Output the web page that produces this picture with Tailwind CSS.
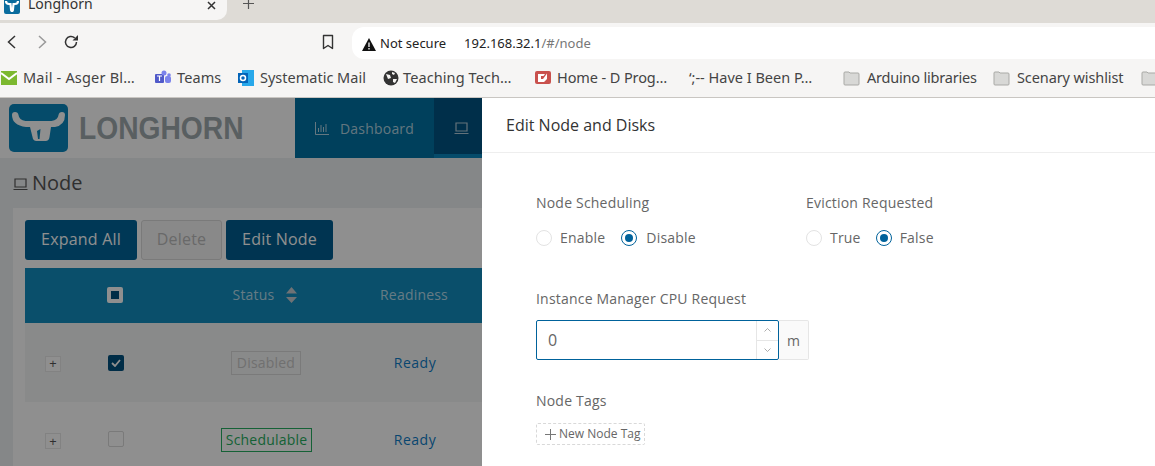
<!DOCTYPE html>
<html lang="en">
<head>
  <meta charset="UTF-8" />
  <title>Longhorn</title>
  <script src="https://cdn.jsdelivr.net/npm/@tailwindcss/browser@4"></script>
</head>
<body class="w-[1155px] h-[466px] overflow-hidden bg-white font-['Open_Sans',sans-serif] tracking-[.2px]">

  <!-- tab strip -->
  <div class="h-[23px] bg-[#dedbd6] overflow-hidden flex items-start font-['Noto_Sans',sans-serif] tracking-normal">
    <div class="w-[227px] h-[20px] bg-[#f6f5f4] rounded-br-[10px] flex items-center pl-1 pr-[11px]">
      <svg class="w-4 h-4 -mt-[8px] shrink-0" viewBox="0 0 16 16"><rect width="16" height="16" rx="2" fill="#0a6c9e"/><path d="M2 3q0 3 3 3h1.500l.5 5q0 2 1 2t1-2l.5-5H11q3 0 3-3" fill="none" stroke="#fff" stroke-width="2.200"/></svg>
      <span class="ml-2 text-[14px] text-[#333] -mt-[13px]">Longhorn</span>
      <span class="ml-auto -mt-[9px]">
        <svg class="w-[9px] h-[9px]" viewBox="0 0 9 9"><path d="M1 1l7 7M8 1L1 8" stroke="#333" stroke-width="1.500"/></svg>
      </span>
    </div>
    <svg class="w-[11px] h-[11px] ml-[16px] -mt-[2px]" viewBox="0 0 11 11"><path d="M5.500 0v11M0 5.500h11" stroke="#555" stroke-width="1.200"/></svg>
  </div>

  <!-- toolbar -->
  <div class="h-[36px] bg-[#f6f5f4] flex items-start pl-[6px] font-['Noto_Sans',sans-serif] tracking-normal">
    <div class="h-[38px] flex items-center">
      <svg class="w-3 h-4" viewBox="0 0 12 16"><path d="M9 2L2.500 8 9 14" fill="none" stroke="#333" stroke-width="1.500"/></svg>
      <svg class="w-3 h-4 ml-[18px]" viewBox="0 0 12 16"><path d="M3 2l6.500 6L3 14" fill="none" stroke="#999" stroke-width="1.500"/></svg>
      <svg class="w-4 h-4 ml-[15px]" viewBox="0 0 16 16"><path d="M13.500 8a5.500 5.500 0 1 1-1.800-4.100" fill="none" stroke="#333" stroke-width="1.500"/><path d="M15 1v5.500H9.500z" fill="#333"/></svg>
      <svg class="w-3 h-4 ml-[243px]" viewBox="0 0 12 16"><path d="M1.500 1.500h9v13L6 11.500l-4.500 3z" fill="none" stroke="#333" stroke-width="1.400" stroke-linejoin="round"/></svg>
    </div>
    <div class="ml-[18px] mt-[4px] h-[32px] flex-1 bg-white rounded-l-[12px] flex items-center pl-[10px] pt-[2px] text-[13px]">
      <svg class="w-[14px] h-[13px]" viewBox="0 0 14 13"><path d="M7 0l7 13H0z" fill="#111"/><path d="M7 4.500v4.500M7 10v1.500" stroke="#fff" stroke-width="1.300"/></svg>
      <span class="ml-1 text-[#222]">Not secure</span>
      <span class="ml-[18px] text-[#222]">192.168.32.1<span class="text-[#777]">/#/node</span></span>
    </div>
  </div>

  <!-- bookmarks bar -->
  <div class="h-[39px] bg-[#f6f5f4] border-b border-[#c9c6c2] flex items-center pb-px text-[14.5px] text-[#444] whitespace-nowrap overflow-hidden font-['Noto_Sans',sans-serif] tracking-normal [&>*]:shrink-0">
    <svg class="w-4 h-[14px] ml-px" viewBox="0 0 16 14"><rect width="16" height="14" fill="#7cb82f"/><path d="M0 2l8 6 8-6" fill="none" stroke="#fff" stroke-width="2"/></svg>
    <span class="ml-[6px] w-[132px] tracking-[.2px]">Mail - Asger Bl…</span>
    <svg class="w-4 h-4" viewBox="0 0 16 16"><rect x="0" y="4" width="9" height="9" rx="1" fill="#5059c9"/><circle cx="9" cy="3" r="2.500" fill="#7b83eb"/><circle cx="14" cy="5" r="1.800" fill="#7b83eb"/><rect x="10" y="6" width="6" height="7" rx="2" fill="#7b83eb"/><path d="M2 6h5M4.500 6v5" stroke="#fff" stroke-width="1.200"/></svg>
    <span class="ml-[6px] w-[61px] tracking-[.1px]">Teams</span>
    <svg class="w-4 h-4" viewBox="0 0 16 16"><rect x="4" width="12" height="16" fill="#28a8ea"/><rect x="0" y="3" width="10" height="10" fill="#0364b8"/><circle cx="5" cy="8" r="2.500" fill="none" stroke="#fff" stroke-width="1.500"/></svg>
    <span class="ml-[6px] w-[123px]">Systematic Mail</span>
    <svg class="w-4 h-4" viewBox="0 0 16 16"><circle cx="8" cy="8" r="7.500" fill="#333"/><path d="M3 4l4 1 1 3-3 1zM10 9l4 0-2 4-2-1zM9 2l3 1-1 2-2-1z" fill="#f6f5f4"/></svg>
    <span class="ml-[4px] w-[132px] tracking-[.1px]">Teaching Tech…</span>
    <svg class="w-4 h-[13px]" viewBox="0 0 16 13"><rect width="16" height="13" rx="2" fill="#c9514d"/><path d="M3 3h7l-1.500 2H6v3h2l4-5.500V8l-3 3H3z" fill="#fff"/></svg>
    <span class="ml-[6px] w-[132px] tracking-[-.1px]">Home - D Prog…</span>
    <span class="w-[154px]">‘;-- Have I Been P…</span>
    <svg class="w-[17px] h-4" viewBox="0 0 17 16"><path d="M1 3q0-1 1-1h4l1 1h8q1 0 1 1v10q0 1-1 1H2q-1 0-1-1z" fill="#d8d8d6" stroke="#a9a9a6"/></svg>
    <span class="ml-[7px] w-[126px] tracking-[-.2px]">Arduino libraries</span>
    <svg class="w-[17px] h-4" viewBox="0 0 17 16"><path d="M1 3q0-1 1-1h4l1 1h8q1 0 1 1v10q0 1-1 1H2q-1 0-1-1z" fill="#d8d8d6" stroke="#a9a9a6"/></svg>
    <span class="ml-[7px] w-[124px] tracking-[-.1px]">Scenary wishlist</span>
    <svg class="w-[17px] h-4" viewBox="0 0 17 16"><path d="M1 3q0-1 1-1h4l1 1h8q1 0 1 1v10q0 1-1 1H2q-1 0-1-1z" fill="#d8d8d6" stroke="#a9a9a6"/></svg>
  </div>

  <!-- page -->
  <div class="relative h-[368px] overflow-hidden bg-[#eef0f2]">
    <!-- app header -->
    <div class="h-[60px] bg-white flex">
      <div class="w-[295px] flex items-center pl-[9px]">
        <svg class="w-[59px] h-[48px]" viewBox="0 0 59 48"><rect width="59" height="48" rx="5" fill="#0a87bd"/><path d="M3 11q0-3 3-3t3.500 3q.5 5 7 6h26q6.500-1 7-6 .5-3 3.500-3t3 3q0 10-10 12h-4l-1.500 10q-.5 4-4 4h-9q-3.500 0-4-4L21 23h-4Q3 21 3 11z" fill="#fff"/><path d="M28 27l3.500-2-1 10h-1.500z" fill="#0a87bd"/></svg>
        <span class="ml-[11px] text-[31px] font-bold leading-none tracking-normal text-[#9fa9ad] font-['Liberation_Sans',sans-serif] scale-x-[.91] origin-left">LONGHORN</span>
      </div>
      <div class="w-[139px] bg-[#0072a4] flex items-center pl-[20px] text-[14px] text-white/70">
        <svg class="w-[14px] h-[14px]" viewBox="0 0 14 14"><path d="M.5 1v12.500H14M3.500 11V7M6 11V4M8.500 11V6M11 11V3" fill="none" stroke="currentColor"/></svg>
        <span class="ml-[11px]">Dashboard</span>
      </div>
      <div class="w-[60px] bg-[#005484] border-b-4 border-[#0a87bd] flex items-center pl-[20px] pt-1 text-white/70">
        <svg class="w-[15px] h-[13px]" viewBox="0 0 15 13"><path d="M2 1h11v8H2zM.5 11.500h14" fill="none" stroke="currentColor" stroke-width="1.200"/></svg>
      </div>
    </div>

    <!-- node page -->
    <div class="flex items-center h-[50px] pl-[13px] text-[#555]">
      <svg class="w-[15px] h-[13px] mt-[2px]" viewBox="0 0 15 13"><path d="M2 1h11v8H2zM.5 11.500h14" fill="none" stroke="currentColor" stroke-width="1.200"/></svg>
      <h1 class="ml-[4px] text-[20px] tracking-normal">Node</h1>
    </div>
    <div class="ml-[13px] bg-white p-3 h-[300px]">
      <div class="flex gap-1 text-[16px] text-white">
        <button class="w-[112px] h-[40px] pb-[2px] rounded-[3px] bg-[#00659a]">Expand All</button>
        <button class="w-[81px] h-[40px] pb-[2px] rounded-[3px] border border-[#d9d9d9] bg-[#f5f5f5] text-[#bbb]">Delete</button>
        <button class="w-[107px] h-[40px] pb-[2px] rounded-[3px] bg-[#005e90]">Edit Node</button>
      </div>
      <div class="mt-2 w-[700px] text-[14px]">
        <div class="h-[55px] pb-[2px] bg-[#128dbf] grid grid-cols-[45px_90px_212px_84px_1fr] items-center text-white/70">
          <span></span>
          <span class="justify-self-center w-4 h-4 rounded-[2px] bg-white flex items-center justify-center"><span class="w-2 h-2 bg-[#00517f]"></span></span>
          <span class="flex items-center justify-center gap-[12px] pr-[2px]">Status
            <svg class="w-[11px] h-4" viewBox="0 0 11 16"><path d="M5.500 0L11 6.500H0zM5.500 16L0 10h11z" fill="#c6ccd0"/></svg>
          </span>
          <span class="text-center">Readiness</span>
        </div>
        <div class="h-[79px] bg-[#f5f6f6] grid grid-cols-[45px_90px_212px_84px_1fr] items-center">
          <span class="ml-5 w-4 h-4 translate-y-[1px] border border-[#e8e8e8] bg-white flex items-center justify-center text-[#555] text-[13px] leading-none">+</span>
          <span class="justify-self-center ml-px w-4 h-4 rounded-[2px] bg-[#00517f] flex items-center justify-center">
            <svg class="w-[10px] h-2" viewBox="0 0 10 8"><path d="M1 4l3 3 5-6" fill="none" stroke="#fff" stroke-width="1.800"/></svg>
          </span>
          <span class="justify-self-center px-[5px] leading-[22px] border border-[#d9d9d9] text-[#c8c8c8]">Disabled</span>
          <span class="text-center text-[#0f7dc8] pb-px pl-[2px] tracking-[.5px]">Ready</span>
        </div>
        <div class="h-[76px] bg-white grid grid-cols-[45px_90px_212px_84px_1fr] items-center">
          <span class="ml-5 w-4 h-4 translate-y-[1px] border border-[#e8e8e8] bg-white flex items-center justify-center text-[#555] text-[13px] leading-none">+</span>
          <span class="justify-self-center ml-px w-4 h-4 -translate-y-[1px] rounded-[2px] border border-[#d9d9d9] bg-white"></span>
          <span class="justify-self-center ml-px px-1 leading-[22px] border border-[#27ae60] text-[#27ae60]">Schedulable</span>
          <span class="text-center text-[#0f7dc8] pb-[2px] pl-[2px] tracking-[.5px]">Ready</span>
        </div>
      </div>
    </div>

    <!-- modal mask -->
    <div class="absolute inset-0 bg-black/44"></div>

    <!-- drawer -->
    <div class="absolute top-0 bottom-0 left-[482px] right-0 bg-white text-[14px] text-[#666]">
      <div class="h-[55px] border-b border-[#eee] flex items-center pl-6 text-[16px] text-[#333] tracking-normal">Edit Node and Disks</div>
      <div class="pl-[54px] pt-[39px]">
        <div class="flex">
          <div class="w-[270px]">
            <div class="leading-[22px]">Node Scheduling</div>
            <div class="mt-[13px] flex items-center leading-[22px]">
              <span class="w-4 h-4 rounded-full border border-[#e3e3e3]"></span>
              <span class="ml-2">Enable</span>
              <span class="ml-[16px] w-4 h-4 rounded-full border border-[#00629b] flex items-center justify-center"><span class="w-2 h-2 rounded-full bg-[#00629b]"></span></span>
              <span class="ml-[9px]">Disable</span>
            </div>
          </div>
          <div>
            <div class="leading-[22px]">Eviction Requested</div>
            <div class="mt-[13px] flex items-center leading-[22px]">
              <span class="w-4 h-4 rounded-full border border-[#e3e3e3]"></span>
              <span class="ml-2">True</span>
              <span class="ml-[15px] w-4 h-4 rounded-full border border-[#00629b] flex items-center justify-center"><span class="w-2 h-2 rounded-full bg-[#00629b]"></span></span>
              <span class="ml-2">False</span>
            </div>
          </div>
        </div>

        <div class="mt-[39px] leading-[22px]">Instance Manager CPU Request</div>
        <div class="mt-[10px] flex h-[40px]">
          <div class="w-[243px] border border-[#00629b] rounded-[2px] flex">
            <span class="flex-1 pl-[11px] text-[16px] leading-[38px] text-[#666]">0</span>
            <div class="w-[22px] border-l border-[#e6e6e6] flex flex-col">
              <span class="flex-1 border-b border-[#e6e6e6] flex items-center justify-center">
                <svg class="w-[7px] h-1" viewBox="0 0 7 4"><path d="M.5 3.500l3-3 3 3" fill="none" stroke="#999" stroke-width=".8"/></svg>
              </span>
              <span class="flex-1 flex items-center justify-center">
                <svg class="w-[7px] h-1" viewBox="0 0 7 4"><path d="M.5.500l3 3 3-3" fill="none" stroke="#999" stroke-width=".8"/></svg>
              </span>
            </div>
          </div>
          <span class="w-[30px] border border-l-0 border-[#e6e6e6] bg-[#fafafa] rounded-r-[2px] flex items-center justify-center">m</span>
        </div>

        <div class="mt-[30px] leading-[22px]">Node Tags</div>
        <div class="mt-[11px] w-[109px] h-[22px] border border-dashed border-[#d9d9d9] rounded-[2px] flex items-center pl-2 text-[12px] tracking-normal">
          <svg class="w-[11px] h-[11px]" viewBox="0 0 11 11"><path d="M5.500 0v11M0 5.500h11" stroke="#777"/></svg>
          <span class="ml-[3px]">New Node Tag</span>
        </div>
      </div>
    </div>
  </div>
</body>
</html>
